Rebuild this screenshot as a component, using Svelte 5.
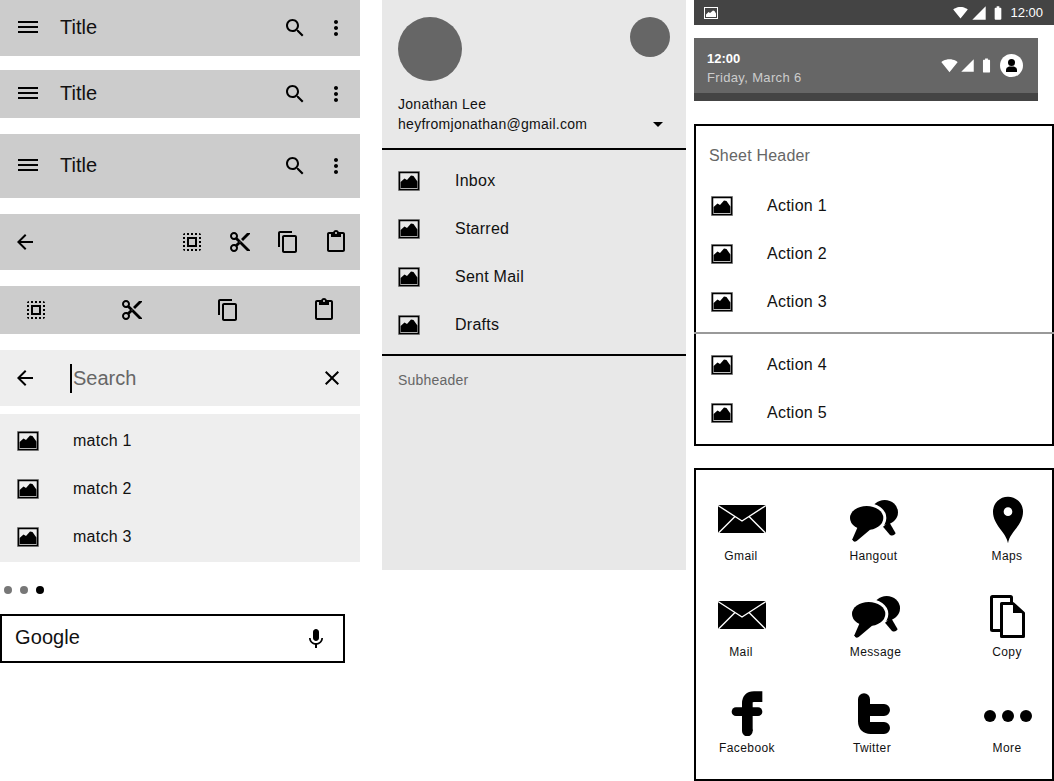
<script>
  const matches = ["match 1", "match 2", "match 3"];
  const drawer = ["Inbox", "Starred", "Sent Mail", "Drafts"];

  // dx nudges each share item off its column centre, the mock isn't quite aligned
  const shares = [
    { name: "Gmail", icon: "mail", dx: 0, lx: -1 },
    { name: "Hangout", icon: "hangout", dx: 0, lx: -0.5 },
    { name: "Maps", icon: "pin", dx: 2, lx: 1 },
    { name: "Mail", icon: "mail", dx: 0, lx: -1 },
    { name: "Message", icon: "hangout", dx: 2, lx: 1.5 },
    { name: "Copy", icon: "copy", dx: 2, lx: 1 },
    { name: "Facebook", icon: "facebook", dx: 4, lx: 5 },
    { name: "Twitter", icon: "twitter", dx: 0, lx: -2 },
    { name: "More", icon: "more", dx: 2, lx: 1 },
  ];

  const P = {
    search: "M15.5 14h-.79l-.28-.27C15.41 12.59 16 11.11 16 9.5 16 5.91 13.09 3 9.5 3S3 5.91 3 9.5 5.91 16 9.5 16c1.61 0 3.09-.59 4.23-1.57l.27.28v.79l5 4.99L20.49 19l-4.99-5zm-6 0C7.01 14 5 11.99 5 9.5S7.01 5 9.5 5 14 7.01 14 9.5 11.99 14 9.5 14z",
    more: "M12 8c1.1 0 2-.9 2-2s-.9-2-2-2-2 .9-2 2 .9 2 2 2zm0 2c-1.1 0-2 .9-2 2s.9 2 2 2 2-.9 2-2-.9-2-2-2zm0 6c-1.1 0-2 .9-2 2s.9 2 2 2 2-.9 2-2-.9-2-2-2z",
    back: "M20 11H7.83l5.59-5.59L12 4l-8 8 8 8 1.41-1.41L7.83 13H20v-2z",
    close: "M19 6.41L17.59 5 12 10.59 6.41 5 5 6.41 10.59 12 5 17.59 6.41 19 12 13.41 17.59 19 19 17.59 13.41 12z",
    cut: "M9.64 7.64c.23-.5.36-1.05.36-1.64 0-2.21-1.79-4-4-4S2 3.79 2 6s1.79 4 4 4c.59 0 1.14-.13 1.64-.36L10 12l-2.36 2.36C7.14 14.13 6.59 14 6 14c-2.21 0-4 1.79-4 4s1.79 4 4 4 4-1.79 4-4c0-.59-.13-1.14-.36-1.64L12 14l7 7h3v-1L9.64 7.64zM6 8c-1.1 0-2-.89-2-2s.9-2 2-2 2 .89 2 2-.9 2-2 2zm0 12c-1.1 0-2-.89-2-2s.9-2 2-2 2 .89 2 2-.9 2-2 2zm6-7.5c-.28 0-.5-.22-.5-.5s.22-.5.5-.5.5.22.5.5-.22.5-.5.5zM19 3l-6 6 2 2 7-7V3z",
    copy: "M16 1H4c-1.1 0-2 .9-2 2v14h2V3h12V1zm3 4H8c-1.1 0-2 .9-2 2v14c0 1.1.9 2 2 2h11c1.1 0 2-.9 2-2V7c0-1.1-.9-2-2-2zm0 16H8V7h11v14z",
    paste: "M19 2h-4.18C14.4.84 13.3 0 12 0c-1.3 0-2.4.84-2.82 2H5c-1.1 0-2 .9-2 2v16c0 1.1.9 2 2 2h14c1.1 0 2-.9 2-2V4c0-1.1-.9-2-2-2zm-7 0c.55 0 1 .45 1 1s-.45 1-1 1-1-.45-1-1 .45-1 1-1zm7 18H5V4h2v3h10V4h2v16z",
    selectAll: "M3 5h2V3c-1.1 0-2 .9-2 2zm0 8h2v-2H3v2zm4 8h2v-2H7v2zM3 9h2V7H3v2zm10-6h-2v2h2V3zm6 0v2h2c0-1.1-.9-2-2-2zM5 21v-2H3c0 1.1.9 2 2 2zm-2-4h2v-2H3v2zM9 3H7v2h2V3zm2 18h2v-2h-2v2zm8-8h2v-2h-2v2zm0 8c1.1 0 2-.9 2-2h-2v2zm0-12h2V7h-2v2zm0 8h2v-2h-2v2zm-4 4h2v-2h-2v2zm0-16h2V3h-2v2zM7 17h10V7H7v10zm2-8h6v6H9V9z",
    mic: "M12 14c1.66 0 2.99-1.34 2.99-3L15 5c0-1.66-1.34-3-3-3S9 3.34 9 5v6c0 1.66 1.34 3 3 3zm5.3-3c0 3-2.54 5.1-5.3 5.1S6.7 14 6.7 11H5c0 3.41 2.72 6.23 6 6.72V21h2v-3.28c3.28-.48 6-3.3 6-6.72h-1.7z",
    wifi: "M12.01 21.49L23.64 7c-.45-.34-4.93-4-11.64-4C5.28 3 .81 6.66.37 7l11.63 14.49.01.01.01-.01z",
    signal: "M2 22h20V2z",
    battery: "M15.67 4H14V2h-4v2H8.33C7.6 4 7 4.6 7 5.33v15.33C7 21.4 7.6 22 8.33 22h7.33c.74 0 1.34-.6 1.34-1.33V5.33C17 4.6 16.4 4 15.67 4z",
  };
</script>

{#snippet mat(d, size = 24)}
  <svg class="mat" width={size} height={size} viewBox="0 0 24 24"><path {d} /></svg>
{/snippet}

{#snippet menu()}
  <svg class="mat" width="24" height="24" viewBox="0 0 24 24">
    <rect x="2" y="5" width="20" height="2" /><rect x="2" y="10" width="20" height="2" /><rect x="2" y="15" width="20" height="2" />
  </svg>
{/snippet}

{#snippet picture()}
  <svg class="pic" width="22" height="20" viewBox="0 0 22 20">
    <rect x="0.5" y="0.5" width="21" height="19" fill="none" stroke="#999" />
    <rect x="1.5" y="1.5" width="19" height="17" fill="none" stroke="#000" stroke-width="1.5" />
    <path d="M2.600 17V11L6.500 7.500 9 9 13 4.500 15.500 5 19.400 10.500V17Z" />
  </svg>
{/snippet}

{#snippet appbar(height, title)}
  <div class="bar" style="height: {height}px">
    <span class="lead">{@render menu()}</span>
    <span class="title">{title}</span>
    <span class="end">{@render mat(P.search)}{@render mat(P.more)}</span>
  </div>
{/snippet}

{#snippet shareIcon(icon)}
  {#if icon === "mail"}
    <svg width="48" height="48" viewBox="0 0 48 48">
      <rect y="9" width="48" height="28" />
      <path d="M0 9.500 24 25 48 9.500M0.500 37 17 20.500M47.500 37 31 20.500" fill="none" stroke="#fff" stroke-width="1.400" />
    </svg>
  {:else if icon === "hangout"}
    <svg width="48" height="48" viewBox="0 0 144 144">
      <ellipse cx="104" cy="49" rx="40" ry="37" />
      <path d="M99 92 120 117Q130 122 137 112L117 77Z" />
      <ellipse cx="50" cy="66" rx="50" ry="36" fill="#fff" stroke="#fff" stroke-width="18" />
      <ellipse cx="50" cy="66" rx="50" ry="36" />
      <path d="M22 95 7 130Q10 141 20 135L62 100Z" />
    </svg>
  {:else if icon === "pin"}
    <svg width="48" height="48" viewBox="0 0 144 144">
      <path fill-rule="evenodd" d="M72 142C67 108 27 88 27 47A45 45 0 0 1 117 47C117 88 77 108 72 142ZM72 34A13 13 0 1 0 72 60 13 13 0 1 0 72 34Z" />
    </svg>
  {:else if icon === "copy"}
    <svg width="48" height="48" viewBox="0 0 48 48">
      <rect x="7.500" y="4.500" width="20" height="34" rx="1" fill="#fff" stroke="#000" stroke-width="3" />
      <path d="M17.500 11.500H29L39.500 21V44.500H17.500Z" fill="#fff" stroke="#000" stroke-width="3" stroke-linejoin="round" />
      <path d="M29 11.500 39.500 21H29Z" />
    </svg>
  {:else if icon === "facebook"}
    <svg width="48" height="48" viewBox="0 0 144 144">
      <path d="M76 129V46Q76 26 96 26H121" fill="none" stroke="#000" stroke-width="32" />
      <circle cx="76" cy="129" r="16" />
      <path d="M42 71H108" fill="none" stroke="#000" stroke-width="26" stroke-linecap="round" />
    </svg>
  {:else if icon === "twitter"}
    <svg width="48" height="48" viewBox="0 0 144 144">
      <path d="M42 34V100Q42 120 62 120H102M42 66H102" fill="none" stroke="#000" stroke-width="36" stroke-linecap="round" />
    </svg>
  {:else}
    <svg width="48" height="48" viewBox="0 0 144 144">
      <circle cx="18" cy="84" r="18" /><circle cx="72" cy="84" r="18" /><circle cx="126" cy="84" r="18" />
    </svg>
  {/if}
{/snippet}

<div class="page">
  <div class="col left">
    {@render appbar(56, "Title")}
    {@render appbar(48, "Title")}
    {@render appbar(64, "Title")}

    <div class="bar actions">
      <span class="lead back">{@render mat(P.back)}</span>
      <span class="end wide">
        {@render mat(P.selectAll)}{@render mat(P.cut)}{@render mat(P.copy)}{@render mat(P.paste)}
      </span>
    </div>

    <div class="bar split">
      {@render mat(P.selectAll)}{@render mat(P.cut)}{@render mat(P.copy)}{@render mat(P.paste)}
    </div>

    <div class="searchbar">
      <span class="lead back">{@render mat(P.back)}</span>
      <span class="caret"></span>
      <span class="placeholder">Search</span>
      <span class="x">{@render mat(P.close)}</span>
    </div>

    <div class="results">
      {#each matches as m}
        <div class="row">{@render picture()}<span>{m}</span></div>
      {/each}
    </div>

    <div class="dots"><i></i><i></i><i class="on"></i></div>

    <div class="google">
      <span class="google-text">Google</span>
      {@render mat(P.mic)}
    </div>
  </div>

  <div class="col middle">
    <div class="account">
      <div class="avatars"><div class="big"></div><div class="small"></div></div>
      <div class="name">Jonathan Lee</div>
      <div class="email"><span>heyfromjonathan@gmail.com</span><b class="caret-down"></b></div>
    </div>
    <div class="nav">
      {#each drawer as d}
        <div class="row">{@render picture()}<span>{d}</span></div>
      {/each}
    </div>
    <div class="subheader">Subheader</div>
  </div>

  <div class="col right">
    <div class="status">
      <svg class="statuspic" width="14" height="12" viewBox="0 0 14 12">
        <rect x="0.500" y="0.500" width="13" height="11" fill="none" stroke="#fff" />
        <path d="M2 10V7.500L4.500 5 6 6 9 3.500 10.500 4 12 6.500V10Z" fill="#fff" />
      </svg>
      <span class="spacer"></span>
      <svg class="w" width="15" height="15" viewBox="0 0 24 24"><path d={P.wifi} /></svg>
      <svg class="s" width="16" height="16" viewBox="0 0 24 24"><path d={P.signal} /></svg>
      <svg class="b" width="16" height="16" viewBox="0 0 24 24"><path d={P.battery} /></svg>
      <span class="clock">12:00</span>
    </div>

    <div class="notif">
      <div class="notif-top">
        <div class="when">
          <div class="time">12:00</div>
          <div class="date">Friday, March 6</div>
        </div>
        <span class="spacer"></span>
        <svg class="nw" width="17" height="17" viewBox="0 0 24 24"><path d={P.wifi} /></svg>
        <svg class="ns" width="15" height="15" viewBox="0 0 24 24"><path d={P.signal} /></svg>
        <svg class="nb" width="17" height="17" viewBox="0 0 24 24"><path d={P.battery} /></svg>
        <div class="me">
          <svg width="15" height="15" viewBox="0 0 15 15">
            <circle cx="7.500" cy="4.500" r="3.500" fill="#000" />
            <path d="M2 14V11.500Q2 9.500 5 8.500H10Q13 9.500 13 11.500V14Z" fill="#000" />
          </svg>
        </div>
      </div>
      <div class="notif-foot"></div>
    </div>

    <div class="sheet">
      <div class="sheet-head">Sheet Header</div>
      {#each ["Action 1", "Action 2", "Action 3"] as a}
        <div class="row">{@render picture()}<span>{a}</span></div>
      {/each}
      <div class="rule"></div>
      {#each ["Action 4", "Action 5"] as a}
        <div class="row">{@render picture()}<span>{a}</span></div>
      {/each}
    </div>

    <div class="share">
      {#each shares as s}
        <div class="item">
          <div class="ico" style="transform: translateX({s.dx}px)">{@render shareIcon(s.icon)}</div>
          <div class="label" style="transform: translateX({s.lx}px)">{s.name}</div>
        </div>
      {/each}
    </div>
  </div>
</div>

<style>
  :global(body) {
    background: #fff;
    font-family: "Liberation Sans", Arial, sans-serif;
    color: #111;
  }
  .page {
    display: flex;
    width: 1054px;
    height: 781px;
    overflow: hidden;
  }
  .col {
    display: flex;
    flex-direction: column;
    flex: none;
  }
  .left {
    width: 360px;
    margin-right: 22px;
  }
  .middle {
    width: 304px;
    height: 570px;
    margin-right: 8px;
    background: #e8e8e8;
  }
  .right {
    width: 360px;
  }
  svg {
    display: block;
    flex: none;
  }
  .spacer {
    flex: 1;
  }

  /* app bars */
  .bar {
    display: flex;
    align-items: center;
    background: #ccc;
    margin-bottom: 14px;
    padding-left: 16px;
  }
  .bar:nth-child(2) {
    margin-bottom: 16px;
  }
  .bar:nth-child(3) {
    margin-bottom: 16px;
  }
  .lead {
    width: 44px;
    flex: none;
  }
  .back {
    margin-left: -3px;
  }
  .title {
    font-size: 20px;
    flex: 1;
    padding-bottom: 2px;
  }
  .end {
    display: flex;
    gap: 17px;
    padding-right: 12px;
  }
  .actions {
    height: 56px;
    margin-bottom: 16px;
  }
  .actions .lead {
    flex: 1;
  }
  .end.wide {
    gap: 24px;
  }
  .split {
    height: 48px;
    justify-content: space-between;
    padding: 0 24px;
    margin-bottom: 16px;
  }

  /* search */
  .searchbar {
    display: flex;
    align-items: center;
    height: 56px;
    background: #eee;
    padding-left: 13px;
    margin-bottom: 8px;
  }
  .searchbar .lead {
    width: 41px;
    margin-left: 0;
  }
  .searchbar .lead.back {
    margin-right: 16px;
  }
  .caret {
    width: 2px;
    height: 29px;
    background: #000;
    margin-right: 1px;
  }
  .placeholder {
    font-size: 20px;
    color: #666;
    flex: 1;
  }
  .x {
    padding-right: 16px;
  }
  .results {
    background: #eee;
    padding: 3px 0 1px;
  }
  .row {
    display: flex;
    align-items: center;
    height: 48px;
    font-size: 16px;
    letter-spacing: 0.25px;
  }
  .results .row {
    padding-left: 17px;
    gap: 34px;
  }
  .dots {
    display: flex;
    gap: 8px;
    padding: 24px 0 20px 4px;
  }
  .dots i {
    width: 8px;
    height: 8px;
    border-radius: 50%;
    background: #777;
  }
  .dots .on {
    background: #000;
  }
  .google {
    box-sizing: border-box;
    display: flex;
    align-items: center;
    justify-content: space-between;
    width: 345px;
    height: 49px;
    border: 2px solid #000;
    padding: 0 15px 0 13px;
    font-size: 20px;
  }
  .google-text {
    padding-bottom: 2px;
    letter-spacing: 0.1px;
  }

  /* drawer */
  .account {
    box-sizing: border-box;
    height: 150px;
    padding: 17px 16px 0;
    border-bottom: 2px solid #000;
    font-size: 14px;
    letter-spacing: 0.28px;
  }
  .avatars {
    display: flex;
    justify-content: space-between;
    margin-bottom: 14px;
  }
  .big,
  .small {
    background: #666;
    border-radius: 50%;
  }
  .big {
    width: 64px;
    height: 64px;
  }
  .small {
    width: 40px;
    height: 40px;
  }
  .name {
    line-height: 18px;
  }
  .email {
    display: flex;
    align-items: center;
    justify-content: space-between;
    line-height: 22px;
    padding-right: 7px;
  }
  .caret-down {
    border-left: 5px solid transparent;
    border-right: 5px solid transparent;
    border-top: 5px solid #000;
  }
  .nav {
    box-sizing: border-box;
    height: 206px;
    padding-top: 7px;
    border-bottom: 2px solid #000;
  }
  .nav .row {
    padding-left: 16px;
    gap: 35px;
  }
  .subheader {
    font-size: 14px;
    color: #666;
    padding: 16px 16px 0;
    line-height: 16px;
    letter-spacing: 0.2px;
  }

  /* status */
  .status {
    display: flex;
    align-items: center;
    height: 25px;
    background: #444;
    padding: 0 11px 0 10px;
  }
  .status path,
  .notif-top path {
    fill: #fff;
  }
  .w {
    margin-right: 2.5px;
  }
  .s {
    margin-right: 3px;
  }
  .b {
    margin-right: 4.5px;
  }
  .clock {
    color: #fff;
    font-size: 13px;
  }
  .notif {
    width: 344px;
    margin: 13px 0 23px;
    background: #444;
  }
  .notif-top {
    display: flex;
    align-items: center;
    box-sizing: border-box;
    height: 55px;
    background: #666;
    padding: 0 15px 0 13px;
  }
  .when {
    padding-top: 4px;
  }
  .nw {
    margin-right: 2px;
  }
  .ns {
    margin-right: 3px;
  }
  .nb {
    margin-right: 5px;
  }
  .time {
    color: #fff;
    font-size: 13px;
    font-weight: bold;
    line-height: 20px;
  }
  .date {
    color: #ccc;
    font-size: 13px;
    line-height: 18px;
    letter-spacing: 0.35px;
  }
  .me {
    display: flex;
    align-items: center;
    justify-content: center;
    width: 23px;
    height: 23px;
    border-radius: 50%;
    background: #fff;
  }
  .me path {
    fill: #000 !important;
  }
  .notif-foot {
    height: 8px;
  }

  /* sheet */
  .sheet {
    box-sizing: border-box;
    height: 322px;
    border: 2px solid #000;
    margin-bottom: 22px;
  }
  .sheet-head {
    font-size: 16px;
    color: #666;
    padding: 21px 0 0 13px;
    line-height: 18px;
    margin-bottom: 17px;
    letter-spacing: 0.2px;
  }
  .sheet .row {
    padding-left: 15px;
    gap: 34px;
  }
  .rule {
    height: 2px;
    background: #999;
    margin: 6px -2px 7px;
  }

  /* share grid */
  .share {
    box-sizing: border-box;
    height: 313px;
    border: 2px solid #000;
    padding-top: 26px;
    display: grid;
    grid-template-columns: 92px 172px 92px;
    grid-auto-rows: 96px;
  }
  .item {
    display: flex;
    flex-direction: column;
    align-items: center;
  }
  .label {
    font-size: 12px;
    line-height: 16px;
    margin-top: 4px;
    white-space: nowrap;
    letter-spacing: 0.4px;
  }
</style>
